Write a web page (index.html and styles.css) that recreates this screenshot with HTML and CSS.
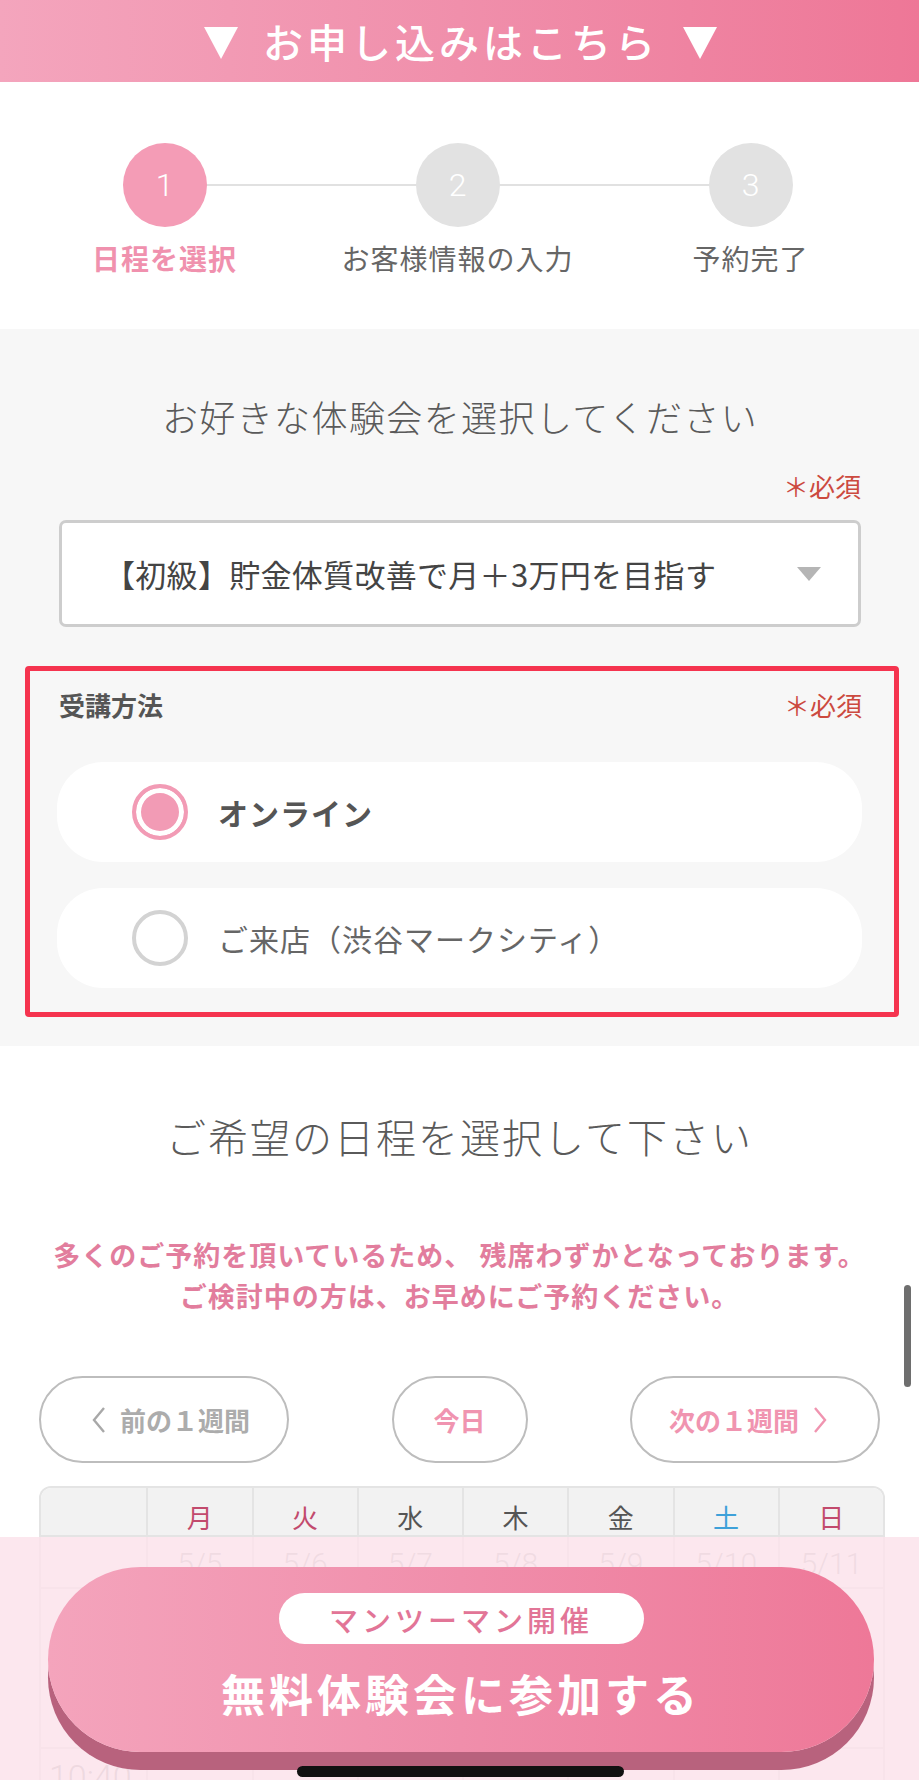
FILE: index.html
```html
<!DOCTYPE html>
<html lang="ja">
<head>
<meta charset="utf-8">
<title>お申し込み</title>
<link rel="stylesheet" href="styles.css">
</head>
<body>
<div class="page">
  <header class="banner">
    <svg class="tri" viewBox="0 0 34 34" width="34" height="34"><polygon points="0,2 34,2 17,34" fill="#fff"/></svg>
    <span class="banner-text">お申し込みはこちら</span>
    <svg class="tri" viewBox="0 0 34 34" width="34" height="34"><polygon points="0,2 34,2 17,34" fill="#fff"/></svg>
  </header>

  <section class="steps">
    <div class="step active">
      <div class="step-num">1</div>
      <div class="step-label">日程を選択</div>
    </div>
    <div class="step">
      <div class="step-num">2</div>
      <div class="step-label">お客様情報の入力</div>
    </div>
    <div class="step">
      <div class="step-num">3</div>
      <div class="step-label">予約完了</div>
    </div>
  </section>

  <section class="course">
    <h2 class="title">お好きな体験会を選択してください</h2>
    <div class="req-row"><span class="req">＊必須</span></div>
    <div class="select">
      <span class="select-text">【初級】貯金体質改善で月＋3万円を目指す</span>
      <svg class="select-arrow" viewBox="0 0 24 14" width="24" height="14"><polygon points="0,0 24,0 12,14" fill="#b5b5b5"/></svg>
    </div>
    <div class="method">
      <div class="method-head">
        <span class="method-label">受講方法</span>
        <span class="req">＊必須</span>
      </div>
      <div class="option">
        <span class="radio on"></span>
        <span class="option-text bold">オンライン</span>
      </div>
      <div class="option">
        <span class="radio"></span>
        <span class="option-text">ご来店（渋谷マークシティ）</span>
      </div>
    </div>
  </section>

  <section class="schedule">
    <h2 class="title big">ご希望の日程を選択して下さい</h2>
    <p class="notice">多くのご予約を頂いているため、 残席わずかとなっております。<br>ご検討中の方は、お早めにご予約ください。</p>
    <div class="week-nav">
      <div class="pill-btn prev"><svg class="chev" viewBox="0 0 14 26" width="14" height="26"><polyline points="12,1 2,13 12,25" fill="none" stroke="#a8a8a8" stroke-width="2.4"/></svg>前の１週間</div>
      <div class="pill-btn today">今日</div>
      <div class="pill-btn next">次の１週間<svg class="chev" viewBox="0 0 14 26" width="14" height="26"><polyline points="2,1 12,13 2,25" fill="none" stroke="#f094b0" stroke-width="2.4"/></svg></div>
    </div>
    <div class="cal">
      <div class="cal-row head">
        <div class="cell"></div>
        <div class="cell red">月</div>
        <div class="cell red">火</div>
        <div class="cell">水</div>
        <div class="cell">木</div>
        <div class="cell">金</div>
        <div class="cell blue">土</div>
        <div class="cell red">日</div>
      </div>
      <div class="cal-row dates">
        <div class="cell"></div>
        <div class="cell">5/5</div>
        <div class="cell">5/6</div>
        <div class="cell">5/7</div>
        <div class="cell">5/8</div>
        <div class="cell">5/9</div>
        <div class="cell">5/10</div>
        <div class="cell">5/11</div>
      </div>
      <div class="cal-row slot">
        <div class="cell time"></div>
        <div class="cell"></div><div class="cell"></div><div class="cell"></div><div class="cell"></div><div class="cell"></div><div class="cell"></div><div class="cell"></div>
      </div>
      <div class="cal-row slot">
        <div class="cell time">10:40</div>
        <div class="cell"></div><div class="cell"></div><div class="cell"></div><div class="cell"></div><div class="cell"></div><div class="cell"></div><div class="cell"></div>
      </div>
    </div>
  </section>

  <div class="scrollbar"></div>
  <div class="overlay"></div>
  <div class="cta">
    <span class="cta-badge">マンツーマン開催</span>
    <span class="cta-text">無料体験会に参加する</span>
  </div>
  <div class="home-bar"></div>
</div>
</body>
</html>
```

FILE: styles.css
```css
* { box-sizing: border-box; }
html, body { margin: 0; padding: 0; }
body {
  width: 919px;
  height: 1780px;
  overflow: hidden;
  background: #fff;
  font-family: "Noto Sans CJK JP", "Noto Sans", sans-serif;
  color: #555;
}
.page { position: relative; width: 919px; height: 1780px; overflow: hidden; }

/* banner */
.banner {
  height: 82px;
  background: linear-gradient(90deg, #f4a5bd 0%, #f08fab 50%, #ee7797 100%);
  display: flex;
  align-items: center;
  justify-content: center;
  padding-left: 2px;
}
.tri { display: block; margin-top: 2px; }
.banner-text {
  color: #fff;
  font-size: 40px;
  font-weight: 500;
  letter-spacing: 4px;
  line-height: 1;
  margin: 0 24px 0 25px;
}

/* steps */
.steps {
  position: relative;
  height: 247px;
  display: grid;
  grid-template-columns: repeat(3, 293px);
  padding: 61px 0 0 18px;
}
.steps::before {
  content: "";
  position: absolute;
  left: 200px;
  right: 170px;
  top: 102px;
  height: 2px;
  background: #e1e1e1;
}
.step { display: flex; flex-direction: column; align-items: center; position: relative; }
.step-num {
  width: 84px;
  height: 84px;
  border-radius: 50%;
  background: #e2e2e2;
  color: #fff;
  font-family: Roboto, "Noto Sans", sans-serif;
  font-weight: 300;
  font-size: 32px;
  display: flex;
  align-items: center;
  justify-content: center;
}
.step.active .step-num { background: #f49cb6; }
.step-label {
  margin-top: 13px;
  font-size: 28px;
  line-height: 36px;
  color: #666;
  letter-spacing: 1px;
  white-space: nowrap;
}
.step.active .step-label { color: #f091ae; font-weight: 700; }

/* course section */
.course {
  background: #f7f7f7;
  padding: 62px 58px 29px 59px;
  height: 717px;
}
.title {
  margin: 0;
  text-align: center;
  font-size: 36px;
  line-height: 50px;
  font-weight: 300;
  color: #5a5a5a;
  letter-spacing: 1.4px;
}
.req-row { display: flex; justify-content: flex-end; margin-top: 27px; }
.req {
  color: #cc4a3f;
  font-size: 26px;
  line-height: 36px;
}
.select {
  margin-top: 16px;
  height: 107px;
  background: #fff;
  border: 3px solid #cdcdcd;
  border-radius: 7px;
  display: flex;
  align-items: center;
  justify-content: space-between;
  padding: 0 37px 0 42px;
}
.select-text {
  font-size: 31px;
  color: #444;
  letter-spacing: 0.3px;
}
.select-arrow { display: block; }

.method {
  margin: 39px -38px 0 -34px;
  border: 5px solid #f5344f;
  border-radius: 4px;
  padding: 16px 32px 24px 27px;
}
.method-head {
  display: flex;
  justify-content: space-between;
  padding-left: 2px;
  margin-bottom: 39px;
}
.method-label {
  font-size: 26px;
  line-height: 36px;
  font-weight: 700;
  color: #555;
}
.option {
  height: 100px;
  background: #fff;
  border-radius: 46px;
  display: flex;
  align-items: center;
  padding-left: 75px;
}
.option + .option { margin-top: 26px; }
.radio {
  width: 56px;
  height: 56px;
  border-radius: 50%;
  border: 4px solid #d3d3d3;
  background: #fff;
  flex: none;
}
.radio.on {
  border-color: #f29bb5;
  background: #f29bb5;
  box-shadow: inset 0 0 0 5px #fff;
}
.option-text {
  margin-left: 30px;
  font-size: 30px;
  color: #666;
  letter-spacing: 1px;
}
.option-text.bold { font-weight: 700; color: #555; }

/* schedule */
.schedule { padding: 62px 0 0 0; }
.title.big { font-size: 40px; line-height: 56px; letter-spacing: 2px; }
.notice {
  margin: 70px 0 0 0;
  text-align: center;
  font-size: 27px;
  line-height: 41px;
  font-weight: 700;
  color: #e27d9d;
  letter-spacing: 1px;
}
.week-nav {
  margin-top: 60px;
  display: flex;
  justify-content: space-between;
  padding: 0 39px;
}
.pill-btn {
  height: 87px;
  border: 2px solid #bdbdbd;
  border-radius: 44px;
  display: flex;
  align-items: center;
  justify-content: center;
  font-size: 26px;
  font-weight: 700;
  color: #f094b0;
}
.pill-btn.prev, .pill-btn.next { width: 250px; }
.pill-btn.prev { color: #acacac; }
.pill-btn.today { width: 136px; }
.chev { display: block; margin: 0 14px; }

.cal {
  margin: 23px 0 0 39px;
  width: 846px;
  border: 2px solid #e4e4e4;
  border-bottom: none;
  border-radius: 12px 12px 0 0;
  overflow: hidden;
}
.cal-row { display: grid; grid-template-columns: repeat(8, 1fr); }
.cal-row .cell { border-left: 2px solid #e4e4e4; display: flex; align-items: center; justify-content: center; }
.cal-row .cell:first-child { border-left: none; }
.cal-row.head { background: #f2f2f2; height: 49px; border-bottom: 2px solid #e4e4e4; }
.cal-row.head .cell { font-size: 26px; color: #555; padding-top: 10px; }
.cal-row.head .cell.red { color: #c24a6d; }
.cal-row.head .cell.blue { color: #3ea1d9; }
.cal-row.dates { height: 50px; }
.cal-row.dates .cell { font-family: Roboto, "Noto Sans", sans-serif; font-weight: 300; font-size: 30px; color: #aaa; padding-top: 2px; }
.cal-row.slot { height: 160px; border-top: 2px solid #e4e4e4; }
.cal-row.slot .cell.time { font-family: Roboto, "Noto Sans", sans-serif; font-weight: 300; font-size: 34px; color: #999; justify-content: flex-start; align-items: flex-start; padding: 8px 0 0 8px; }

.scrollbar {
  position: absolute;
  left: 904px;
  top: 1285px;
  width: 7px;
  height: 102px;
  border-radius: 4px;
  background: #6e6e6e;
}
.overlay {
  position: absolute;
  left: 0;
  right: 0;
  top: 1537px;
  bottom: 0;
  background: rgba(251, 227, 235, 0.86);
}
.cta {
  position: absolute;
  left: 48px;
  top: 1567px;
  width: 826px;
  height: 185px;
  border-radius: 93px;
  background: linear-gradient(90deg, #f4a4bc 0%, #f08eab 50%, #ee7898 100%);
  box-shadow: 0 18px 0 #b8627d;
  display: flex;
  flex-direction: column;
  align-items: center;
  padding-top: 26px;
}
.cta-badge {
  width: 365px;
  height: 51px;
  border-radius: 26px;
  background: #fff;
  color: #e27597;
  font-size: 29px;
  font-weight: 500;
  letter-spacing: 4px;
  display: flex;
  align-items: center;
  justify-content: center;
}
.cta-text {
  margin-top: 19px;
  color: #fff;
  font-size: 44px;
  line-height: 60px;
  font-weight: 700;
  letter-spacing: 4px;
}
.home-bar {
  position: absolute;
  left: 297px;
  top: 1766px;
  width: 327px;
  height: 11px;
  border-radius: 6px;
  background: #111;
}
```
